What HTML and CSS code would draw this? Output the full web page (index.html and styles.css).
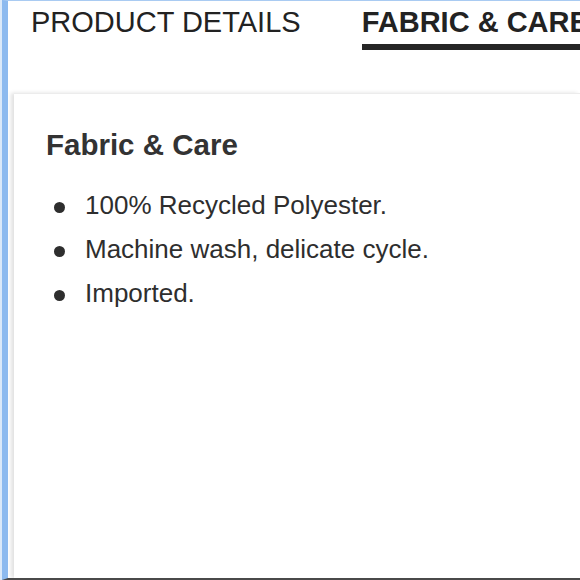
FILE: index.html
```html
<!DOCTYPE html>
<html lang="en">
<head>
    <meta charset="UTF-8">
    <title>Fabric &amp; Care</title>
    <link rel="stylesheet" href="styles.css">
</head>
<body>
    <div class="window">
        <div class="tabs">
            <div class="tab">PRODUCT DETAILS</div>
            <div class="tab active">FABRIC &amp; CARE</div>
        </div>

        <div class="panel">
            <h2>Fabric &amp; Care</h2>
            <ul class="care-list">
                <li>100% Recycled Polyester.</li>
                <li>Machine wash, delicate cycle.</li>
                <li>Imported.</li>
            </ul>
        </div>
    </div>
</body>
</html>
```

FILE: styles.css
```css
body, html {
    height: 100%;
    margin: 0;
    font-family: "Liberation Sans", Arial, sans-serif;
    background-color: #dbe9f9;
    overflow: hidden;
}
.window {
    height: 577px;
    margin-left: 2px;
    border-left: 6px solid #8dbaef;
    border-top: 1px solid #a9cbf2;
    border-bottom: 2px solid #4a4a4a;
    background-color: #fff;
    display: flex;
    flex-direction: column;
    overflow: hidden;
}
.tabs {
    display: flex;
    gap: 61px;
    padding: 5px 0 0 23px;
    margin-bottom: 43px;
    white-space: nowrap;
}
.tab {
    font-size: 29px;
    line-height: 32px;
    color: #222;
    padding-bottom: 6px;
    border-bottom: 6px solid transparent;
}
.tab.active {
    font-weight: bold;
    padding-right: 40px;
    border-bottom-color: #262626;
}
.panel {
    flex: 1;
    margin-left: 6px;
    padding: 34px 32px 0 32px;
    border-top: 1px solid #ececec;
    box-shadow: -3px 0 4px rgba(0, 0, 0, 0.12);
    background-color: #fff;
}
.panel h2 {
    margin: 0;
    font-size: 29.5px;
    line-height: 33px;
    color: #333;
}
.care-list {
    list-style: none;
    margin: 22px 0 0 0;
    padding: 0;
}
.care-list li {
    font-size: 26px;
    line-height: 44px;
    color: #2e2e2e;
}
.care-list li::before {
    content: "";
    display: inline-block;
    width: 11px;
    height: 11px;
    border-radius: 50%;
    background-color: #2e2e2e;
    margin: 0 20px 0 8px;
    vertical-align: middle;
}
```
